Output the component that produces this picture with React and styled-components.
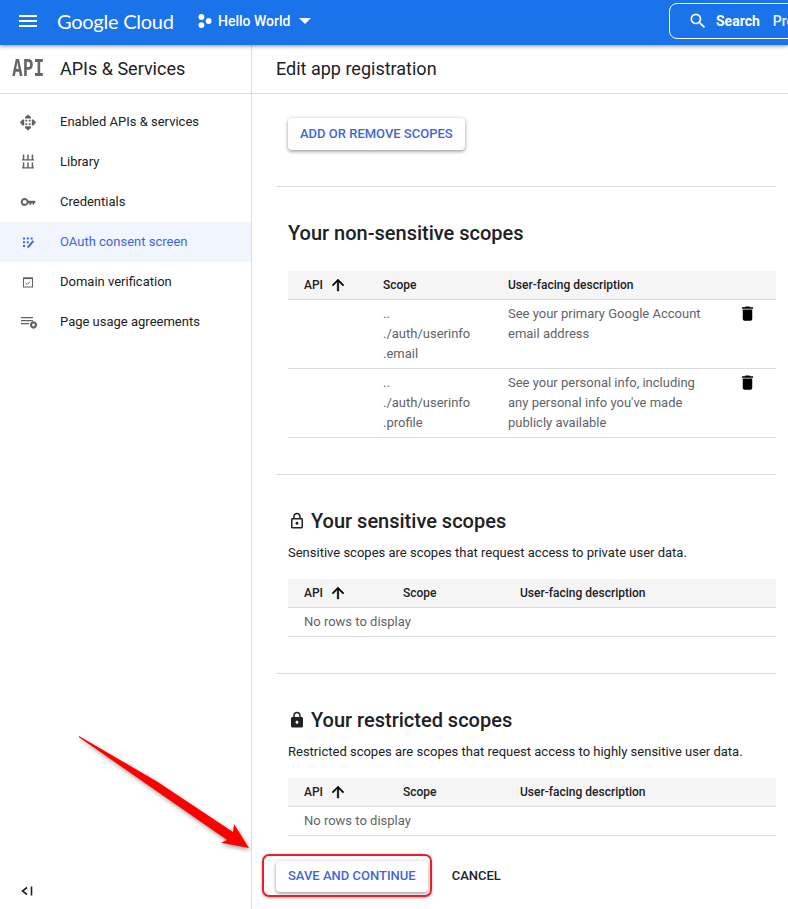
import React from "react";
import styled, { createGlobalStyle } from "styled-components";

const NAV_ITEMS = [
  { label: "Enabled APIs & services", icon: "enabled" },
  { label: "Library", icon: "library" },
  { label: "Credentials", icon: "key" },
  { label: "OAuth consent screen", icon: "oauth", active: true },
  { label: "Domain verification", icon: "domain" },
  { label: "Page usage agreements", icon: "usage" },
];

const NavIcon = ({ name }) => {
  if (name === "enabled") {
    return (
      <svg width="18" height="18" viewBox="0 0 18 18" fill="#5f6368">
        <path d="M9 1.4l3 2.5v1.7H6V3.9zM9 17.4l-3-2.5v-1.7h6v1.7zM1 9.4l2.5-3h1.7v6H3.5zM17 9.4l-2.5 3h-1.7v-6h1.7z" />
        <path d="M6.4 6.8h1.8v1.8H6.4zM9.8 6.8h1.8v1.8H9.8zM6.4 10.2h1.8V12H6.4zM9.8 10.2h1.8V12H9.8z" />
      </svg>
    );
  }
  if (name === "library") {
    return (
      <svg width="18" height="18" viewBox="0 0 18 18" fill="#5f6368">
        <path d="M3.8 1.5h1.5v5H3.8zM8.2 1.5h1.5v5H8.2zM12.7 1.5h1.5v5h-1.5zM3 6.2h12v1.3H3z" />
        <path d="M3.8 9.5h1.5v5H3.8zM8.2 9.5h1.5v5H8.2zM12.7 9.5h1.5v5h-1.5zM3 14.2h12v1.3H3z" />
      </svg>
    );
  }
  if (name === "key") {
    return (
      <svg width="16" height="16" viewBox="0 0 24 24" fill="#5f6368">
        <path d="M21 10h-8.35A5.99 5.99 0 0 0 7 6c-3.31 0-6 2.69-6 6s2.69 6 6 6a5.99 5.99 0 0 0 5.65-4H14v2h3v-2h2v2h2v-2h2v-4h-2zM7 15c-1.65 0-3-1.35-3-3s1.35-3 3-3 3 1.35 3 3-1.35 3-3 3z" />
      </svg>
    );
  }
  if (name === "oauth") {
    return (
      <svg width="18" height="18" viewBox="0 0 18 18" fill="#3f67d6">
        <path d="M4 4.5h2v2H4zM7.8 4.5h2v2h-2zM11.6 4.5h2v2h-2zM4 8.3h2v2H4zM7.8 8.3h2v2h-2zM4 12.1h2v2H4z" />
        <path d="M8.6 13.2l5-6 1.5 1.2-5 6-1.9.5z" />
      </svg>
    );
  }
  if (name === "domain") {
    return (
      <svg width="18" height="18" viewBox="0 0 18 18" fill="none" stroke="#5f6368">
        <rect x="4.5" y="5" width="9" height="9" strokeWidth="1" />
        <path d="M4 4.5h10v1.6H4z" fill="#5f6368" stroke="none" />
        <path d="M6.8 10.2l1.4 1.3 2.9-2.9" strokeWidth="1" />
      </svg>
    );
  }
  if (name === "usage") {
    return (
      <svg width="20" height="18" viewBox="0 0 20 18" fill="#5f6368">
        <path d="M3 4h12v1.2H3zM3 7h12v1.2H3zM3 10h8v1.2H3z" />
        <circle cx="15.5" cy="12" r="2.4" fill="none" stroke="#5f6368" strokeWidth="2" />
        <path d="M14.7 8.4h1.6v1.4h-1.6zM14.7 14.2h1.6v1.4h-1.6zM11.9 11.2h1.4v1.6h-1.4zM17.7 11.2h1.4v1.6h-1.4z" />
      </svg>
    );
  }
  return null;
};

const ArrowUp = () => (
  <svg width="18" height="18" viewBox="0 0 24 24" fill="#000" stroke="#000" strokeWidth="0.6">
    <path d="M4 12l1.41 1.41L11 7.83V20h2V7.83l5.58 5.59L20 12l-8-8-8 8z" />
  </svg>
);

const TrashIcon = () => (
  <svg width="19" height="19" viewBox="0 0 24 24" fill="#000">
    <path d="M6 19c0 1.1.9 2 2 2h8c1.1 0 2-.9 2-2V7H6v12zM19 4h-3.5l-1-1h-5l-1 1H5v2h14V4z" />
  </svg>
);

const LockOutline = () => (
  <svg width="18" height="18" viewBox="0 0 24 24" fill="#202124">
    <path d="M18 8h-1V6c0-2.76-2.24-5-5-5S7 3.24 7 6v2H6c-1.1 0-2 .9-2 2v10c0 1.1.9 2 2 2h12c1.1 0 2-.9 2-2V10c0-1.1-.9-2-2-2zM9 6c0-1.66 1.34-3 3-3s3 1.34 3 3v2H9V6zm9 14H6V10h12v10zm-6-3c1.1 0 2-.9 2-2s-.9-2-2-2-2 .9-2 2 .9 2 2 2z" />
  </svg>
);

const LockFilled = () => (
  <svg width="18" height="18" viewBox="0 0 24 24" fill="#202124">
    <path d="M18 8h-1V6c0-2.76-2.24-5-5-5S7 3.24 7 6v2H6c-1.1 0-2 .9-2 2v10c0 1.1.9 2 2 2h12c1.1 0 2-.9 2-2V10c0-1.1-.9-2-2-2zm-6 9c-1.1 0-2-.9-2-2s.9-2 2-2 2 .9 2 2-.9 2-2 2zM9 8V6c0-1.66 1.34-3 3-3s3 1.34 3 3v2H9z" />
  </svg>
);

const ScopeTable = ({ wide, rows }) => (
  <div>
    <HeadRow $wide={wide}>
      <ApiCell>
        API
        <ArrowUp />
      </ApiCell>
      <Cell>Scope</Cell>
      <Cell>User-facing description</Cell>
    </HeadRow>
    {rows ? (
      rows.map((row) => (
        <BodyRow key={row.scope}>
          <Cell />
          <Cell>
            ..
            <br />
            ./auth/userinfo
            <br />
            {row.scope}
          </Cell>
          <Cell>{row.description}</Cell>
          <TrashCell>
            <TrashIcon />
          </TrashCell>
        </BodyRow>
      ))
    ) : (
      <EmptyRow>No rows to display</EmptyRow>
    )}
  </div>
);

export default function App() {
  return (
    <Page>
      <GlobalStyle />
      <TopBar>
        <Burger>
          <span />
          <span />
          <span />
        </Burger>
        <Logo>Google Cloud</Logo>
        <Project>
          <svg width="14" height="14" viewBox="0 0 14 14" fill="#fff">
            <circle cx="3.4" cy="2.9" r="2.9" />
            <circle cx="3.4" cy="11.1" r="2.9" />
            <circle cx="10.6" cy="7" r="2.9" />
          </svg>
          <ProjectName>Hello World</ProjectName>
          <Caret />
        </Project>
        <SearchBox>
          <svg width="20" height="20" viewBox="0 0 24 24" fill="#fff">
            <path d="M15.5 14h-.79l-.28-.27A6.471 6.471 0 0 0 16 9.5 6.5 6.5 0 1 0 9.5 16c1.61 0 3.09-.59 4.23-1.57l.27.28v.79l5 4.99L20.49 19l-4.99-5zm-6 0C7.01 14 5 11.99 5 9.5S7.01 5 9.5 5 14 7.01 14 9.5 11.99 14 9.5 14z" />
          </svg>
          <SearchLabel>Search</SearchLabel>
          <SearchHint>Products, resources, docs (/)</SearchHint>
        </SearchBox>
      </TopBar>
      <Body>
        <Sidebar>
          <SideHeader>
            <ApiMark>API</ApiMark>
            <SideTitle>APIs &amp; Services</SideTitle>
          </SideHeader>
          <Nav>
            {NAV_ITEMS.map((item) => (
              <NavItem key={item.label} $active={item.active}>
                <NavIconSlot>
                  <NavIcon name={item.icon} />
                </NavIconSlot>
                {item.label}
              </NavItem>
            ))}
          </Nav>
          <Collapse>
            <svg width="14" height="14" viewBox="0 0 14 14" fill="none" stroke="#202124" strokeWidth="1.6">
              <path d="M7 3.5L2.5 7 7 10.5M11.5 2.5v9" />
            </svg>
          </Collapse>
        </Sidebar>
        <Main>
          <PageTitleBar>Edit app registration</PageTitleBar>
          <Content>
            <RaisedButton>ADD OR REMOVE SCOPES</RaisedButton>
            <Divider />
            <Heading>Your non-sensitive scopes</Heading>
            <TableGap $size={24} />
            <ScopeTable
              rows={[
                { scope: ".email", description: "See your primary Google Account email address" },
                { scope: ".profile", description: "See your personal info, including any personal info you've made publicly available" },
              ]}
            />
            <Divider />
            <Heading>
              <LockOutline />
              Your sensitive scopes
            </Heading>
            <Note>Sensitive scopes are scopes that request access to private user data.</Note>
            <ScopeTable wide />
            <Divider />
            <Heading>
              <LockFilled />
              Your restricted scopes
            </Heading>
            <Note>Restricted scopes are scopes that request access to highly sensitive user data.</Note>
            <ScopeTable wide />
          </Content>
          <Footer>
            <Highlighted>
              <FooterSave>SAVE AND CONTINUE</FooterSave>
              <RedFrame />
            </Highlighted>
            <TextButton>CANCEL</TextButton>
          </Footer>
        </Main>
      </Body>
      <RedArrow width="180" height="120" viewBox="0 0 180 120">
        <polygon points="0,0 78,45.5 154,96 155,88 170,112 142,106.7 148,104 0,1.2" fill="#ff0000" />
      </RedArrow>
    </Page>
  );
}

const GlobalStyle = createGlobalStyle`
  html, body {
    margin: 0;
    padding: 0;
    overflow: hidden;
    background: #fff;
  }
`;

const Page = styled.div`
  position: relative;
  display: flex;
  flex-direction: column;
  width: 788px;
  height: 909px;
  overflow: hidden;
  font-family: Roboto, "Liberation Sans", sans-serif;
  color: #202124;
`;

const TopBar = styled.header`
  position: relative;
  z-index: 2;
  display: flex;
  align-items: center;
  flex: none;
  box-sizing: border-box;
  height: 45px;
  padding: 0 0 4px 19px;
  background: #1a73e8;
  box-shadow: 0 1px 4px rgba(0, 0, 0, 0.45);
`;

const Burger = styled.div`
  display: flex;
  flex: none;
  flex-direction: column;
  gap: 3px;
  width: 18px;
  margin-right: 20px;

  span {
    height: 2px;
    background: #fff;
  }
`;

const Logo = styled.div`
  flex: none;
  width: 141px;
  font-family: Lato, sans-serif;
  font-size: 20px;
  letter-spacing: -0.25px;
  white-space: nowrap;
  color: #fff;
`;

const Project = styled.div`
  display: flex;
  flex: none;
  align-items: center;
`;

const ProjectName = styled.span`
  margin: 0 9px 0 6px;
  font-size: 14px;
  font-weight: 500;
  white-space: nowrap;
  color: #fff;
`;

const Caret = styled.span`
  width: 0;
  height: 0;
  border-left: 6px solid transparent;
  border-right: 6px solid transparent;
  border-top: 6px solid #fff;
`;

const SearchBox = styled.div`
  display: flex;
  align-items: center;
  flex: none;
  box-sizing: border-box;
  width: 400px;
  height: 36px;
  margin-left: auto;
  margin-right: -281px;
  padding-left: 18px;
  border: 1px solid #fff;
  border-radius: 8px;
  white-space: nowrap;
  color: #fff;
  font-size: 14px;
`;

const SearchLabel = styled.span`
  margin-left: 8px;
  font-weight: 700;
`;

const SearchHint = styled.span`
  margin-left: 13px;
  font-weight: 500;
  color: #e8f0fe;
`;

const Body = styled.div`
  display: flex;
  flex: 1;
  min-height: 0;
`;

const Sidebar = styled.aside`
  display: flex;
  flex-direction: column;
  flex: none;
  box-sizing: border-box;
  width: 252px;
  border-right: 1px solid #dadce0;
`;

const SideHeader = styled.div`
  display: flex;
  align-items: center;
  box-sizing: border-box;
  height: 49px;
  padding: 0 0 2px 12px;
  border-bottom: 1px solid #dadce0;
`;

const ApiMark = styled.span`
  display: inline-block;
  width: 48px;
  font-family: "DejaVu Sans Mono", monospace;
  font-size: 23px;
  font-weight: 700;
  color: #666;
  transform: scaleX(0.78);
  transform-origin: left center;
`;

const SideTitle = styled.h1`
  margin: 0;
  font-size: 18px;
  font-weight: 400;
`;

const Nav = styled.nav`
  display: flex;
  flex-direction: column;
  padding-top: 8px;
`;

const NavItem = styled.div`
  display: flex;
  align-items: center;
  height: 40px;
  padding-bottom: 1px;
  box-sizing: border-box;
  font-size: 13px;
  color: ${({ $active }) => ($active ? "#3f67d6" : "#202124")};
  background: ${({ $active }) => ($active ? "#f1f5fe" : "transparent")};
`;

const NavIconSlot = styled.span`
  display: flex;
  justify-content: center;
  width: 60px;
  padding-right: 4px;
  box-sizing: border-box;
`;

const Collapse = styled.div`
  display: flex;
  margin-top: auto;
  padding: 0 0 11px 20px;
`;

const Main = styled.main`
  display: flex;
  flex-direction: column;
  flex: 1;
  min-width: 0;
`;

const PageTitleBar = styled.div`
  display: flex;
  align-items: center;
  flex: none;
  box-sizing: border-box;
  height: 49px;
  padding: 0 0 2px 24px;
  border-bottom: 1px solid #dadce0;
  font-size: 18px;
`;

const Content = styled.div`
  display: flex;
  flex-direction: column;
  padding: 24px 12px 0 36px;
`;

const RaisedButton = styled.button`
  align-self: flex-start;
  height: 32px;
  padding: 0 12px 2px;
  border: 0;
  border-radius: 4px;
  background: #fff;
  font-family: inherit;
  font-size: 13px;
  font-weight: 500;
  color: #3f67d6;
  box-shadow: 0 1px 4px rgba(0, 0, 0, 0.3), 0 2px 3px rgba(0, 0, 0, 0.15);
`;

const Divider = styled.hr`
  height: 1px;
  margin: 36px 0 32px -12px;
  border: 0;
  background: #dadce0;
`;

const Heading = styled.h2`
  display: flex;
  align-items: center;
  gap: 5px;
  height: 28px;
  margin: 0;
  font-size: 20px;
  font-weight: 500;
`;

const TableGap = styled.div`
  height: ${({ $size }) => $size}px;
`;

const Note = styled.p`
  margin: 8px 0 16px;
  font-size: 13px;
  line-height: 20px;
`;

const HeadRow = styled.div`
  display: grid;
  grid-template-columns: ${({ $wide }) => ($wide ? "99px 117px 1fr" : "79px 125px 232px 52px")};
  align-items: center;
  height: 29px;
  padding-bottom: 1px;
  box-sizing: border-box;
  background: #f5f5f5;
  border-bottom: 1px solid #dadce0;
  font-size: 12px;
  font-weight: 500;
`;

const Cell = styled.div`
  padding: 0 16px;
  min-width: 0;
`;

const ApiCell = styled(Cell)`
  display: flex;
  align-items: center;
  gap: 6px;
`;

const BodyRow = styled.div`
  display: grid;
  grid-template-columns: 79px 125px 232px 52px;
  box-sizing: border-box;
  height: 69px;
  padding-top: 4px;
  border-bottom: 1px solid #dadce0;
  font-size: 13px;
  line-height: 20px;
  color: #5f6368;
`;

const TrashCell = styled.div`
  padding-left: 14px;
`;

const EmptyRow = styled.div`
  display: flex;
  align-items: center;
  box-sizing: border-box;
  height: 29px;
  padding: 0 0 1px 16px;
  border-bottom: 1px solid #dadce0;
  font-size: 13px;
  color: #5f6368;
`;

const Footer = styled.div`
  display: flex;
  align-items: center;
  gap: 12px;
  padding: 25px 0 0 24px;
`;

const Highlighted = styled.div`
  position: relative;
  display: flex;
`;

const FooterSave = styled(RaisedButton)`
  height: 31px;
`;

const RedFrame = styled.div`
  position: absolute;
  inset: -7px -4px -5px -14px;
  border: 2px solid #ee1c25;
  border-radius: 7px;
  box-shadow: 0 1px 3px rgba(0, 0, 0, 0.3);
  pointer-events: none;
`;

const TextButton = styled.button`
  padding: 0 12px 2px;
  border: 0;
  background: none;
  font-family: inherit;
  font-size: 13px;
  font-weight: 500;
  color: #202124;
`;

const RedArrow = styled.svg`
  position: absolute;
  left: 79px;
  top: 736px;
  overflow: visible;
  filter: drop-shadow(1px 2px 2px rgba(0, 0, 0, 0.4));
`;
